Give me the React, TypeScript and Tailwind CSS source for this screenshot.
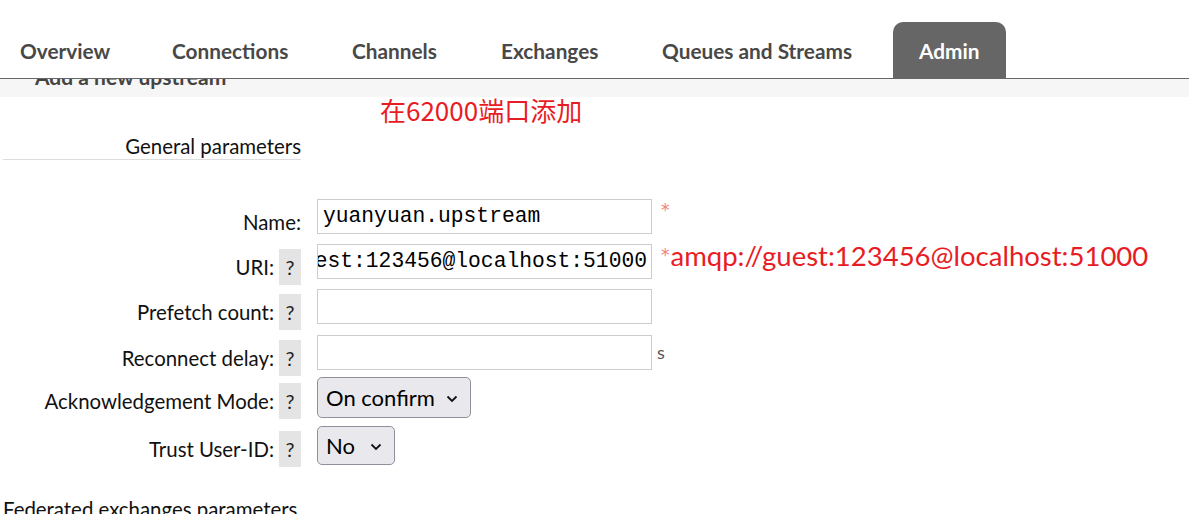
import React from "react";

const Help = () => (
  <span className="inline-flex w-[22px] h-[36px] items-center justify-center bg-[#e4e4e4] text-[20px] text-[#222] ml-[5px]">?</span>
);

const Input = ({ children, right }: { children?: React.ReactNode; right?: boolean }) => (
  <div
    className={`w-[335px] h-[35px] border border-[#ccc] bg-white flex items-center overflow-hidden whitespace-nowrap font-['Liberation_Mono',monospace] text-[21.3px] text-black ${right ? "justify-end pr-[4px]" : "pl-[5px]"}`}
  >
    {children}
  </div>
);

const Select = ({ label, w }: { label: string; w: string }) => (
  <div className={`${w} h-full border border-[#8f8f9d] rounded-[5px] bg-[#e9e9ed] flex items-center pl-[8px] pr-[12px] justify-between text-[22px] text-black`}>
    <span>{label}</span>
    <svg width="12" height="8" viewBox="0 0 12 8" className="mt-[2px]">
      <path d="M1.5 1.5 L6 6 L10.5 1.5" fill="none" stroke="#111" strokeWidth="1.8" />
    </svg>
  </div>
);

const Star = () => (
  <span className="ml-[9px] mt-[1px] text-[17px] leading-[20px] text-[#f08080] font-['DejaVu_Sans',sans-serif]">*</span>
);

const Row = ({
  label,
  help = true,
  h,
  children,
}: {
  label: string;
  help?: boolean;
  h: string;
  children: React.ReactNode;
}) => (
  <div className={`flex ${h}`}>
    <div className="w-[301px] flex justify-end items-start pt-[5px] shrink-0">
      <span className="h-[36px] flex items-center text-[20.4px] text-[#111] whitespace-nowrap">{label}</span>
      {help && <Help />}
    </div>
    <div className="ml-[16px] flex items-start">{children}</div>
  </div>
);

export default function App() {
  const tabs = [
    { t: "Overview", w: "w-[152px]" },
    { t: "Connections", w: "w-[180px]" },
    { t: "Channels", w: "w-[149px]" },
    { t: "Exchanges", w: "w-[161px]" },
    { t: "Queues and Streams", w: "w-[231px]" },
  ];
  return (
    <div className="w-[1189px] h-[514px] overflow-hidden bg-white font-['Lato',sans-serif] text-[#222]">
      {/* nav */}
      <div className="h-[79px] flex items-end pl-[20px] border-b border-[#666]">
        {tabs.map((x) => (
          <div key={x.t} className={`${x.w} h-[56px] flex items-center pt-[2px] text-[20.8px] font-bold text-[#484848] whitespace-nowrap`}>
            {x.t}
          </div>
        ))}
        <div className="w-[113px] h-[56px] bg-[#666] rounded-t-[10px] flex items-center pt-[2px] pl-[26px] text-[20.8px] font-bold text-white">
          Admin
        </div>
      </div>
      {/* clipped header band */}
      <div className="h-[18px] bg-[#f6f6f6] overflow-hidden">
        <div className="pl-[35px] -mt-[16px] leading-[28px] text-[21px] font-bold text-[#444] whitespace-nowrap">Add a new upstream</div>
      </div>
      {/* red annotation */}
      <div className="h-[31px] pl-[380px] flex items-center font-['Noto_Sans_CJK_SC',sans-serif] text-[26px] text-[#e81c24] leading-none -mt-[3px]">
        在62000端口添加
      </div>
      {/* General parameters */}
      <div className="mt-[8px] ml-[3px] w-[298px] border-b border-[#ddd] h-[27px] flex items-center justify-end text-[20.4px] text-[#111]">
        General parameters
      </div>
      <div className="mt-[39px] flex flex-col">
        <Row label="Name:" help={false} h="h-[45px]">
          <Input>yuanyuan.upstream</Input>
          <Star />
        </Row>
        <Row label="URI:" h="h-[45px]">
          <Input right>amqp://guest:123456@localhost:51000</Input>
          <Star />
          <span className="ml-[1px] -mt-[8px] text-[27.5px] text-[#e81c24] whitespace-nowrap leading-[40px]">
            amqp://guest:123456@localhost:51000
          </span>
        </Row>
        <Row label="Prefetch count:" h="h-[46px]">
          <Input />
        </Row>
        <Row label="Reconnect delay:" h="h-[43px]">
          <Input />
          <span className="ml-[5px] mt-[4px] text-[18px] text-[#555]">s</span>
        </Row>
        <Row label="Acknowledgement Mode:" h="h-[48px]">
          <div className="h-[41px] -mt-[1px]">
            <Select label="On confirm" w="w-[154px]" />
          </div>
        </Row>
        <Row label="Trust User-ID:" h="h-[45px]">
          <div className="h-[39px]">
            <Select label="No" w="w-[78px]" />
          </div>
        </Row>
      </div>
      <div className="mt-[24px] ml-[3px] text-[20.4px] text-[#111] leading-[28px] whitespace-nowrap">Federated exchanges parameters</div>
    </div>
  );
}
